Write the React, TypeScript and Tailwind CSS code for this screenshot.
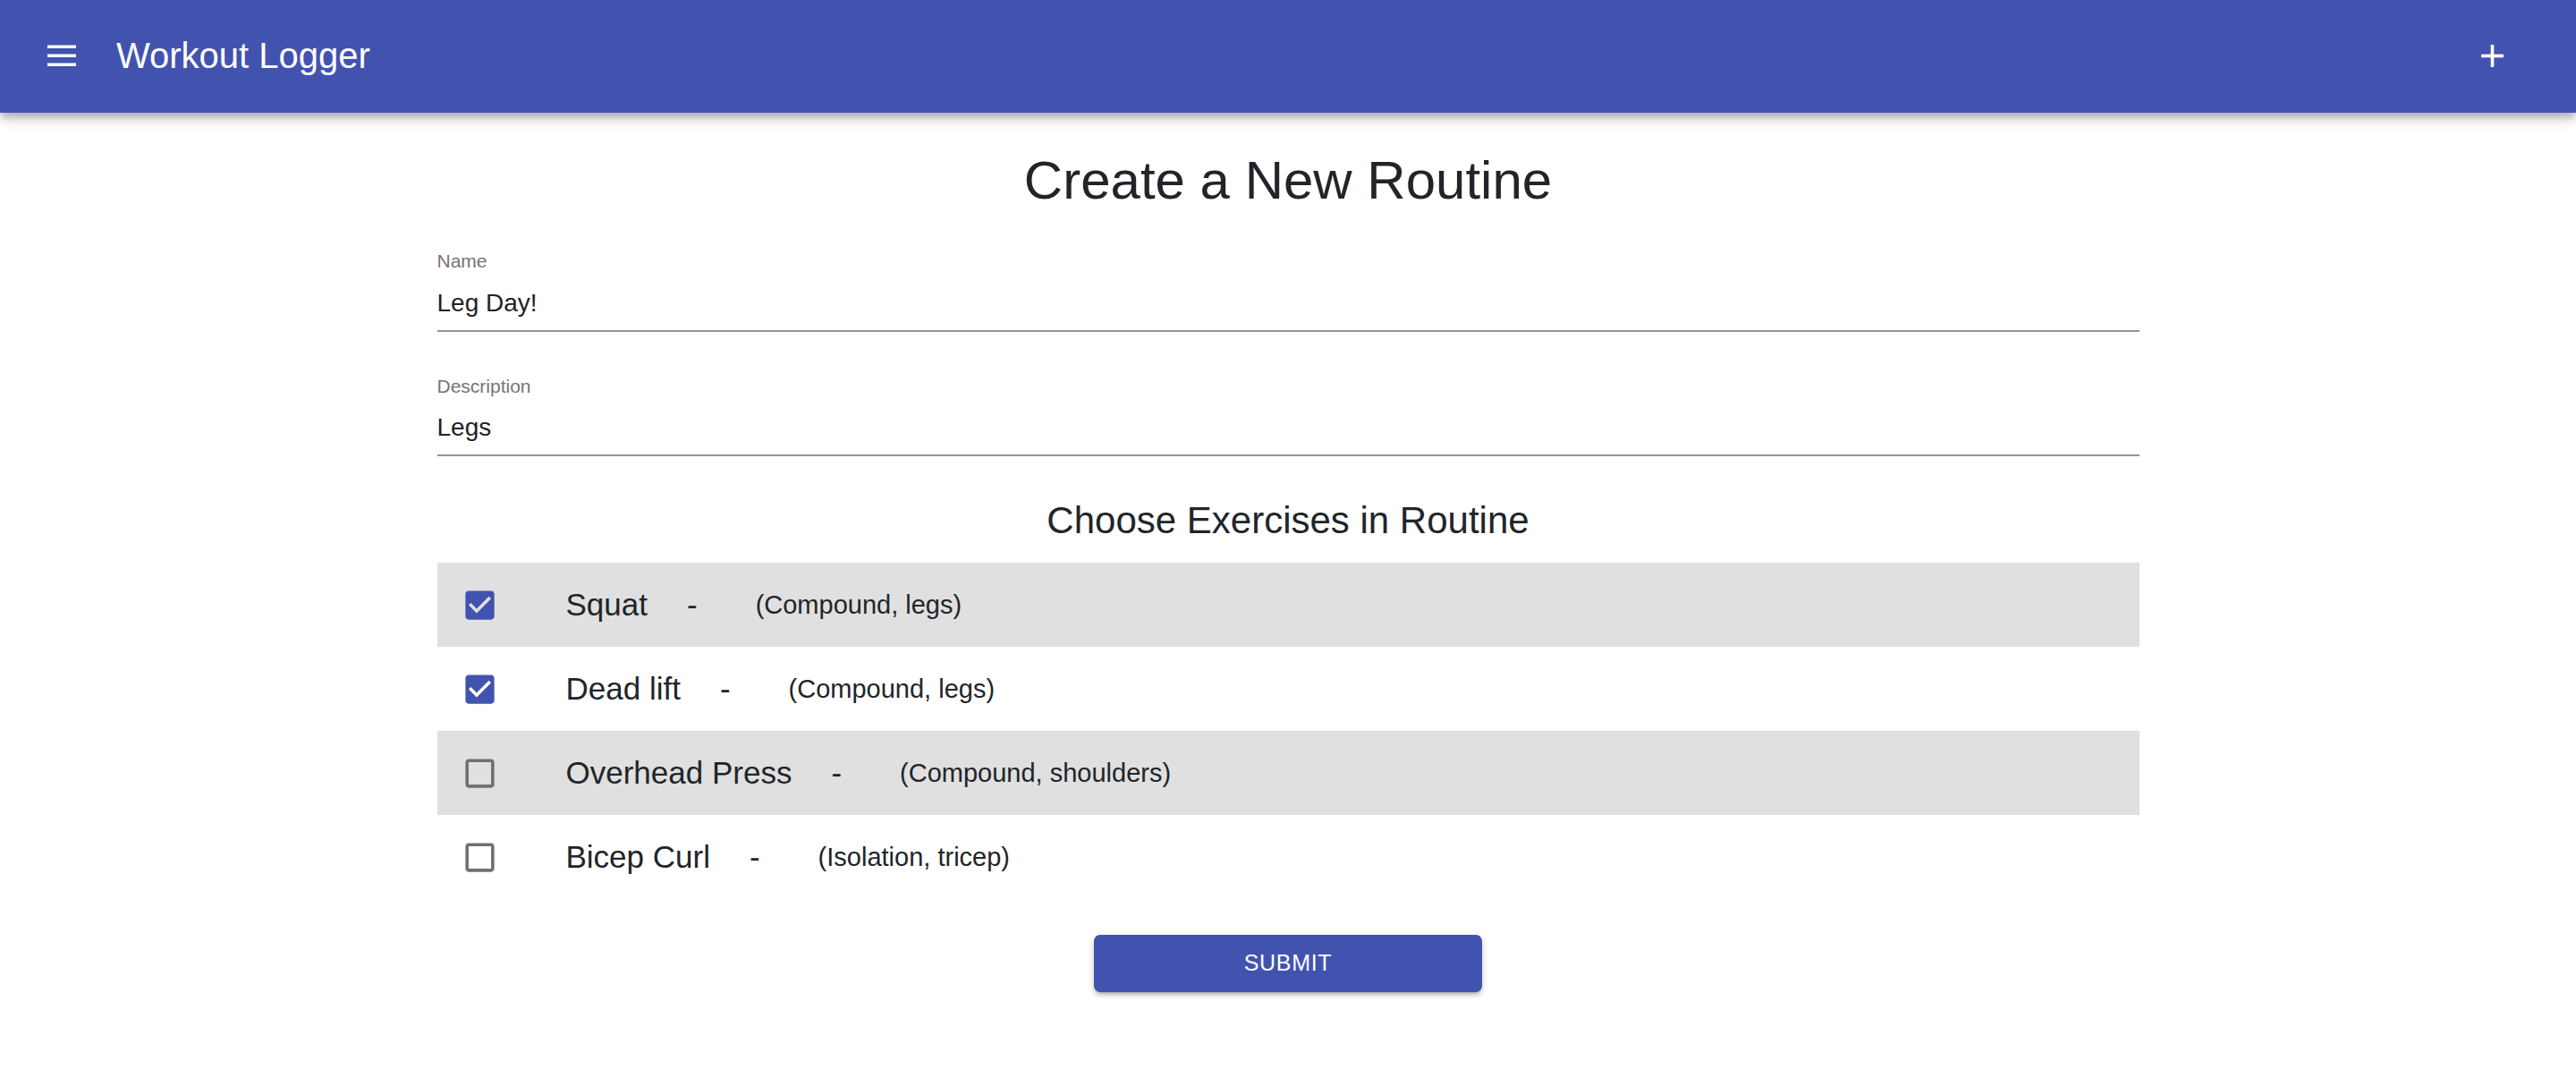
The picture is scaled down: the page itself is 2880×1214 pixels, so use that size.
import { useState } from 'react';

type Exercise = {
  name: string;
  type: string;
  muscle: string;
};

const exercises: Exercise[] = [
  { name: 'Squat', type: 'Compound', muscle: 'legs' },
  { name: 'Dead lift', type: 'Compound', muscle: 'legs' },
  { name: 'Overhead Press', type: 'Compound', muscle: 'shoulders' },
  { name: 'Bicep Curl', type: 'Isolation', muscle: 'tricep' },
];

function CheckIcon({ checked }: { checked: boolean }) {
  return (
    <svg viewBox="0 0 24 24" className="w-[43px] h-[43px] shrink-0">
      {checked ? (
        <path
          fill="#4253af"
          d="M19 3H5c-1.11 0-2 .9-2 2v14c0 1.1.89 2 2 2h14c1.11 0 2-.9 2-2V5c0-1.1-.89-2-2-2zm-9 14l-5-5 1.41-1.41L10 14.17l7.59-7.59L19 8l-9 9z"
        />
      ) : (
        <path
          fill="#707070"
          d="M19 5v14H5V5h14m0-2H5c-1.1 0-2 .9-2 2v14c0 1.1.9 2 2 2h14c1.1 0 2-.9 2-2V5c0-1.1-.9-2-2-2z"
        />
      )}
    </svg>
  );
}

export default function App() {
  const [name, setName] = useState('Leg Day!');
  const [desc, setDesc] = useState('Legs');
  const [picked, setPicked] = useState([true, true, false, false]);

  return (
    <div className="min-h-screen bg-white font-['Liberation_Sans',Arial,sans-serif] text-[#212529]">
      {/* APP BAR */}
      <header className="relative z-10 flex items-center h-[126px] pl-[53px] pr-[81px] bg-[#4253af] text-white shadow-[0_4px_8px_-2px_rgba(0,0,0,0.2),0_8px_10px_0_rgba(0,0,0,0.14),0_2px_20px_0_rgba(0,0,0,0.12)]">
        <svg viewBox="0 0 32 24" className="w-[32px] h-[24px] -mt-[2px]">
          <rect x="0" y="0.5" width="32" height="3.5" fill="white" />
          <rect x="0" y="10.5" width="32" height="3.5" fill="white" />
          <rect x="0" y="20.5" width="32" height="3.5" fill="white" />
        </svg>
        <h1 className="ml-[45px] text-[40px] leading-[48px] -mt-[2px]">Workout Logger</h1>
        <div className="flex-1" />
        <svg viewBox="0 0 25 25" className="w-[25px] h-[25px] -mt-[1px]">
          <rect x="10.7" y="0" width="3.6" height="25" fill="white" />
          <rect x="0" y="10.7" width="25" height="3.6" fill="white" />
        </svg>
      </header>

      {/* FORM */}
      <main className="w-[1903px] mx-auto pb-[100px]">
        <h2 className="mt-[40px] text-center text-[60px] leading-[72px]">Create a New Routine</h2>

        <label className="block mt-[42px]">
          <span className="block text-[21px] leading-[24px] text-[#757575]">Name</span>
          <input
            value={name}
            onChange={(e) => setName(e.target.value)}
            className="block w-full mt-[19px] pb-[14px] text-[28px] leading-[32px] text-[#222] border-b-2 border-[#949494] outline-none bg-transparent"
          />
        </label>

        <label className="block mt-[49px]">
          <span className="block text-[21px] leading-[24px] text-[#757575]">Description</span>
          <input
            value={desc}
            onChange={(e) => setDesc(e.target.value)}
            className="block w-full mt-[18px] pb-[14px] text-[28px] leading-[32px] text-[#222] border-b-2 border-[#949494] outline-none bg-transparent"
          />
        </label>

        <h3 className="mt-[47px] text-center text-[42px] leading-[50px]">Choose Exercises in Routine</h3>

        <div className="mt-[22px]">
          {exercises.map((ex, i) => (
            <div
              key={ex.name}
              onClick={() => setPicked(picked.map((p, j) => (j === i ? !p : p)))}
              className={`flex items-center h-[94px] pl-[26px] cursor-pointer ${
                i % 2 === 0 ? 'bg-[#e0e0e0]' : 'bg-white'
              }`}
            >
              <CheckIcon checked={picked[i]} />
              <span className="ml-[75px] text-[35px] leading-[40px]">{ex.name}</span>
              <span className="ml-[44px] text-[35px] leading-[40px]">-</span>
              <span className="ml-[65px] text-[29px] leading-[32px]">
                ({ex.type}, {ex.muscle})
              </span>
            </div>
          ))}
        </div>

        <div className="flex justify-center mt-[40px]">
          <button className="w-[434px] h-[64px] rounded-[7px] bg-[#4253af] text-white text-[25px] tracking-[0.7px] uppercase shadow-[0_5px_2px_-4px_rgba(0,0,0,0.2),0_4px_4px_0_rgba(0,0,0,0.14),0_2px_9px_0_rgba(0,0,0,0.12)]">
            Submit
          </button>
        </div>
      </main>
    </div>
  );
}
